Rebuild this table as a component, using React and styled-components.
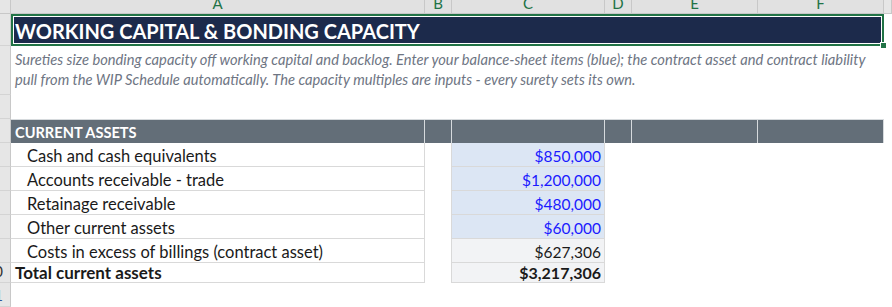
import { Fragment } from 'react';
import styled, { createGlobalStyle } from 'styled-components';

const GlobalStyle = createGlobalStyle`
  * {
    box-sizing: border-box;
  }
  body {
    margin: 0;
    background: #ffffff;
    font-family: Lato, 'Open Sans', sans-serif;
  }
`;

const Sheet = styled.div`
  display: grid;
  grid-template-columns: 11px 414px 27px 153px 27px 126px 126px 1fr;
  grid-template-rows: 14px 32px 49px 24px repeat(6, 24px) 20px;
  width: 892px;
  height: 307px;
  overflow: hidden;
`;

const Corner = styled.div`
  background: #e6e6e6;
  border-right: 1px solid #c8c8c8;
  border-bottom: 1px solid #c8c8c8;
`;

const ColHeader = styled.div`
  display: flex;
  align-items: flex-end;
  justify-content: center;
  overflow: hidden;
  background: ${(p) => (p.$active ? '#e1e1e1' : '#e6e6e6')};
  border-right: 1px solid #c8c8c8;
  border-bottom: 1px solid #c8c8c8;
  color: ${(p) => (p.$active ? '#217346' : '#444')};
  font-size: 15px;
  line-height: 15px;
  padding-bottom: 2px;
`;

const RowHeader = styled.div`
  display: flex;
  align-items: flex-end;
  justify-content: flex-end;
  overflow: hidden;
  grid-column: 1;
  background: #e6e6e6;
  border-right: 1px solid #c8c8c8;
  border-bottom: 1px solid #d4d4d4;
  color: ${(p) => p.$color || '#333'};
  font-size: 15px;
  line-height: 15px;
  padding: 0 7px 3px 0;
  white-space: nowrap;
`;

const TitleCell = styled.div`
  position: relative;
  grid-column: 2 / 8;
  display: flex;
  align-items: center;
  background: #1c2a4b;
  border: 2px solid #217346;
  box-shadow: inset 0 0 0 1px #ffffff;
  color: #ffffff;
  font-weight: 700;
  font-size: 20px;
  padding-left: 2px;
  padding-top: 1px;
  white-space: nowrap;
`;

const FillHandle = styled.span`
  position: absolute;
  right: -5px;
  bottom: -5px;
  width: 7px;
  height: 7px;
  background: #217346;
  border: 1px solid #ffffff;
`;

const NoteCell = styled.div`
  grid-column: 2 / 8;
  padding: 3px 0 0 4px;
  color: #6e7583;
  font-style: italic;
  font-size: 14.7px;
  line-height: 20px;
`;

const NoteLine = styled.div`
  white-space: nowrap;
`;

const Blank = styled.div`
  grid-column: ${(p) => p.$span || 'auto'};
`;

const SectionCell = styled.div`
  display: flex;
  align-items: flex-end;
  background: #636e78;
  border-top: 1px solid #d6dadd;
  border-right: 1px solid #d6dadd;
  color: #ffffff;
  font-weight: 700;
  font-size: 14.6px;
  line-height: 15px;
  padding: 0 0 3px 4px;
  white-space: nowrap;
`;

const LabelCell = styled.div`
  display: flex;
  align-items: flex-end;
  border-right: 1px solid #d9d9d9;
  border-bottom: 1px solid #d9d9d9;
  color: #1a1a1a;
  font-weight: ${(p) => (p.$total ? 700 : 400)};
  font-size: ${(p) => (p.$total ? '17px' : '16.5px')};
  line-height: 17px;
  padding: 0 0 1px ${(p) => (p.$total ? '4px' : '16px')};
  white-space: nowrap;
`;

const GapCell = styled.div`
  border-right: 1px solid #d9d9d9;
`;

const ValueCell = styled.div`
  display: flex;
  align-items: flex-end;
  justify-content: flex-end;
  background: ${(p) => (p.$input ? '#dce6f4' : '#f2f3f5')};
  border-right: 1px solid #d9d9d9;
  border-bottom: 1px solid #d9d9d9;
  color: ${(p) => (p.$input ? '#1a1aff' : '#1a1a1a')};
  font-weight: ${(p) => (p.$total ? 700 : 400)};
  font-size: ${(p) => (p.$total ? '16px' : '15.5px')};
  line-height: 17px;
  padding: 0 3px 1px 0;
  white-space: nowrap;
`;

const columns = [
  { id: 'A', active: true },
  { id: 'B', active: true },
  { id: 'C', active: true },
  { id: 'D', active: true },
  { id: 'E', active: true },
  { id: 'F', active: true },
  { id: '', active: false },
];

const lines = [
  { label: 'Cash and cash equivalents', value: '$850,000', input: true },
  { label: 'Accounts receivable - trade', value: '$1,200,000', input: true },
  { label: 'Retainage receivable', value: '$480,000', input: true },
  { label: 'Other current assets', value: '$60,000', input: true },
  { label: 'Costs in excess of billings (contract asset)', value: '$627,306' },
  { label: 'Total current assets', value: '$3,217,306', total: true, row: '10' },
];

export default function App() {
  return (
    <>
      <GlobalStyle />
      <Sheet>
        <Corner />
        {columns.map((c, i) => (
          <ColHeader key={i} $active={c.active}>
            {c.id}
          </ColHeader>
        ))}

        <RowHeader />
        <TitleCell>
          WORKING CAPITAL &amp; BONDING CAPACITY
          <FillHandle />
        </TitleCell>
        <Blank />

        <RowHeader />
        <NoteCell>
          <NoteLine>
            Sureties size bonding capacity off working capital and backlog. Enter your
            balance-sheet items (blue); the contract asset and contract liability
          </NoteLine>
          <NoteLine>
            pull from the WIP Schedule automatically. The capacity multiples are inputs -
            every surety sets its own.
          </NoteLine>
        </NoteCell>
        <Blank />

        <RowHeader />
        <Blank $span="2 / 9" />

        <RowHeader />
        <SectionCell>CURRENT ASSETS</SectionCell>
        <SectionCell />
        <SectionCell />
        <SectionCell />
        <SectionCell />
        <SectionCell />
        <Blank />

        {lines.map((l) => (
          <Fragment key={l.label}>
            <RowHeader>{l.row || ''}</RowHeader>
            <LabelCell $total={l.total}>{l.label}</LabelCell>
            <GapCell />
            <ValueCell $input={l.input} $total={l.total}>
              {l.value}
            </ValueCell>
            <Blank $span="5 / 9" />
          </Fragment>
        ))}

        <RowHeader $color="#2f5597">11</RowHeader>
        <Blank $span="2 / 9" />
      </Sheet>
    </>
  );
}
